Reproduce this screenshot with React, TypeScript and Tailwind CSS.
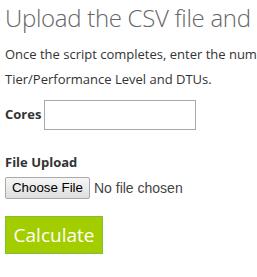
export default function App() {
  return (
    <div className="w-[257px] h-[277px] overflow-hidden bg-white">
      <div className="w-[900px] pl-[5px] text-[#333] font-['Open_Sans','Noto_Sans',sans-serif]">
        <h1 className="pt-[2px] text-[24px] leading-[32px] font-light text-[#666] whitespace-nowrap tracking-[-0.3px]">
          Upload the CSV file and Calculate
        </h1>
        <p className="mt-[8px] text-[13px] leading-[25px] whitespace-nowrap">
          Once the script completes, enter the number of cores from the on-premises server and upload the CSV file to see the recommended Service
          <br />
          Tier/Performance Level and DTUs.
        </p>
        <div className="mt-[8px] flex items-center gap-[3px]">
          <label className="text-[13px] font-bold">Cores</label>
          <input
            type="text"
            className="w-[152px] h-[30px] border border-[#a9a9a9] outline-none px-2"
          />
        </div>
        <div className="mt-[22px] text-[13px] font-bold leading-[20px]">File Upload</div>
        <div className="mt-[5px] flex items-center gap-[4px] font-['Liberation_Sans',Arial,sans-serif] text-[13.3px]">
          <button className="h-[22px] px-[6px] border border-[#a9a9a9] rounded-[2px] bg-gradient-to-b from-[#f6f6f6] to-[#dedede] text-black leading-none">
            Choose File
          </button>
          <span className="text-[#444] text-[14px]">No file chosen</span>
        </div>
        <button className="mt-[17px] w-[98px] h-[38px] bg-[#a4cd00] border border-[#7cbf3c] text-white text-[19px] font-['Open_Sans','Noto_Sans',sans-serif]">
          Calculate
        </button>
      </div>
    </div>
  );
}
